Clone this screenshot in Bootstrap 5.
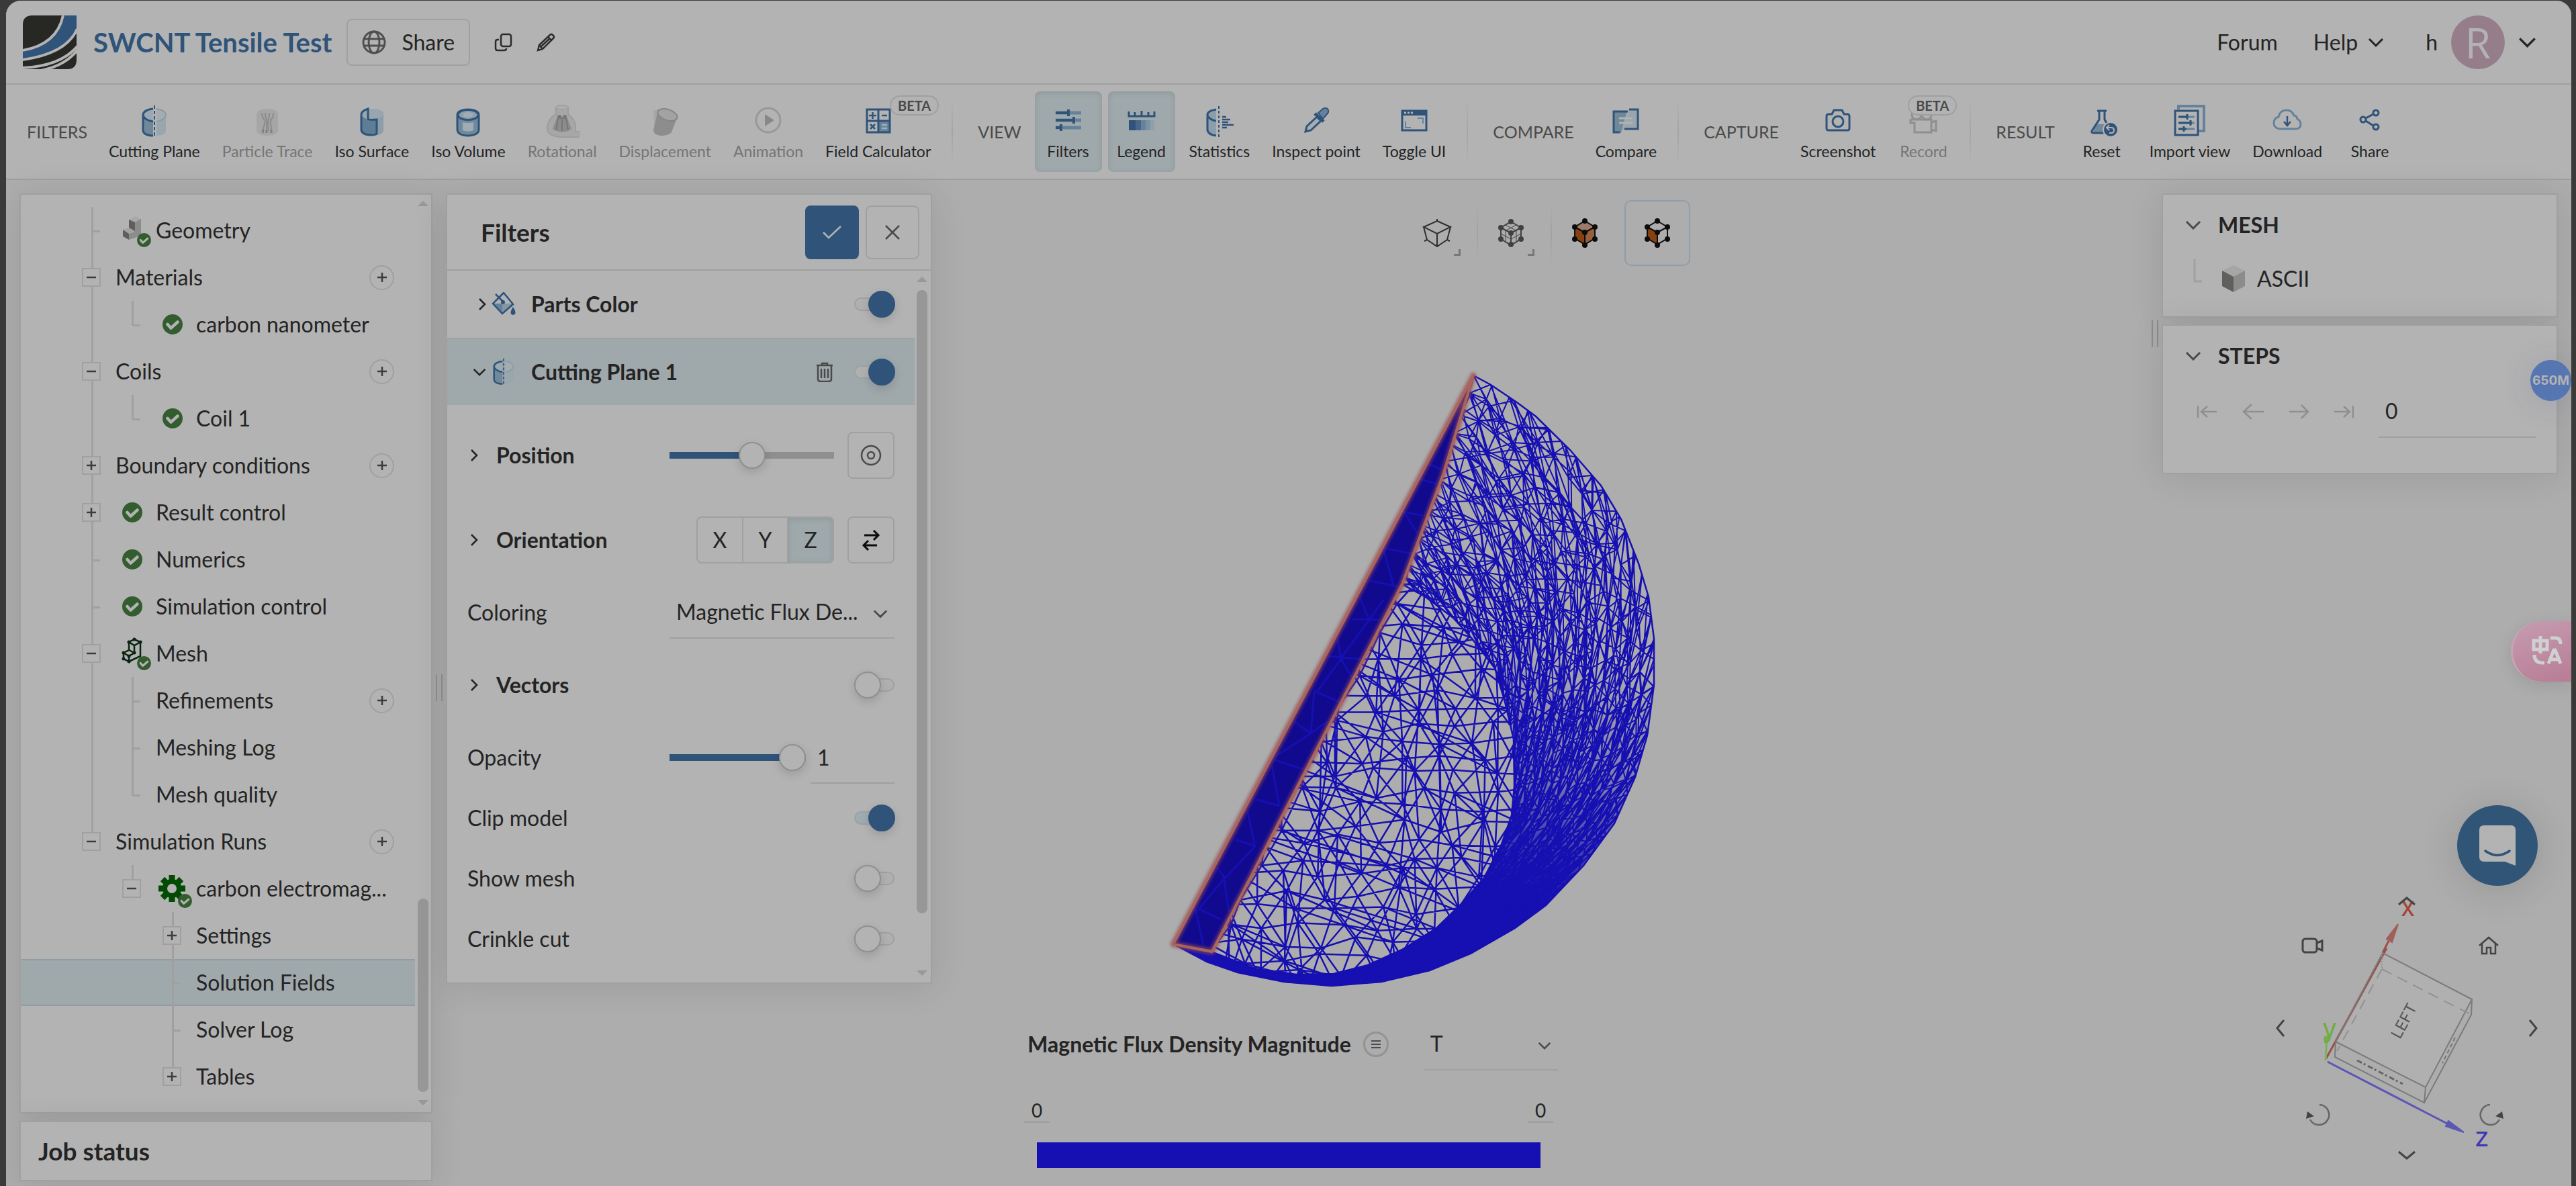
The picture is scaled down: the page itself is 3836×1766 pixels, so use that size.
<!DOCTYPE html>
<html lang="en">
<head>
<meta charset="utf-8">
<meta name="viewport" content="width=device-width, initial-scale=1">
<title>SWCNT Tensile Test</title>
<link href="https://cdn.jsdelivr.net/npm/bootstrap@5.3.0/dist/css/bootstrap.min.css" rel="stylesheet">
<style>
:root{--ink:#242424;--muted:#4a4a4a;--edge:#a0a0a0;--panel:#b3b3b3;--blue:#2f5379;--sel:#9fa8ab;--mesh:#160fb1}
html,body{height:100%}
body{background:#3a3a3a;color:var(--ink);font-family:Lato,"Noto Sans",sans-serif;font-size:32px;line-height:40px;overflow:hidden}
button{font-family:inherit;color:inherit}
svg{flex:none;display:block}
.app-shell{margin:1px 7px 0 9px;height:calc(100vh - 1px);border-radius:22px 22px 0 0;background:#adadad;overflow:hidden;position:relative}
.top-bar{height:125px;background:var(--panel);border-bottom:2px solid var(--edge);padding:0 52px 0 25px}
.top-bar a,.top-bar .user-btn{color:var(--ink);text-decoration:none}
.app-title{font-size:40px;font-weight:700;color:var(--blue);margin:0 22px 0 25px;line-height:50px}
.bare{background:none;border:0;padding:0}
.line-btn{background:transparent;border:2px solid var(--edge);border-radius:8px;padding:0;display:flex;align-items:center;justify-content:center}
.share-btn{height:70px;padding:0 21px;gap:23px}
.title-act{margin-left:36px}
.help-link{margin:0 62px 0 53px;gap:15px}
.user-btn{gap:20px}
.avatar{width:80px;height:80px;border-radius:50%;background:#957d8a;color:#b3b3b3;font:400 62px/80px "Open Sans","Noto Sans",sans-serif;text-align:center}
.tool-bar{height:142px;background:var(--panel);border-bottom:2px solid var(--edge);padding-left:31px}
.grp-name{font-size:25px;color:var(--muted);margin-right:20px;line-height:30px}
.tool{background:none;border:0;border-radius:8px;height:120px;min-width:100px;padding:20px 12px 15px;font-size:23px;line-height:28px;display:flex;flex-direction:column;align-items:center;gap:5px;white-space:nowrap;position:relative}
.tool+.tool{margin-left:9px}
.tool.on{background:var(--sel);box-shadow:inset 0 2px 10px rgba(0,0,0,.1)}
.tool:disabled{color:#757575}
.beta{position:absolute;top:6px;right:0;border:2px solid var(--edge);border-radius:15px;background:var(--panel);font-size:20px;font-weight:700;line-height:26px;padding:0 10px;color:var(--muted)}
.tool-sep{width:2px;height:100px;background:linear-gradient(transparent,#a4a4a4,transparent);margin:0 37px 0 19px}
.work{height:calc(100% - 267px);padding:20px 20px 7px;position:relative}
.box{background:var(--panel);border:2px solid var(--edge);box-shadow:0 4px 50px rgba(0,0,0,.1)}
.left-col{width:615px;gap:11px}
.box-title{font-size:37px;font-weight:700}
.job{height:90px;padding-left:26px}
.grip{width:10px;height:40px;border-left:2px solid #8d8d8d;border-right:2px solid #8d8d8d}
.grip-left{padding:716px 5px 0}
.grip-right{padding:189px 5px 0 0;margin-left:-15px}
.tree{padding:18px 0 0;flex:1;margin:0;list-style:none}
.trow{display:flex;align-items:center;height:70px;padding:0 31px 0 91px;white-space:nowrap}
.trow.sel{background:var(--sel);box-shadow:inset 0 2px #8f9ca3,inset 0 -2px #8f9ca3}
.trow>b{font-weight:400;margin-left:-10px;flex:1;overflow:hidden;text-overflow:ellipsis}
.trow svg{overflow:visible}
.g{width:60px;height:70px;flex:none;position:relative;display:flex;align-items:center}
.v::before,.h::before{content:"";position:absolute;left:14px;top:0;width:3px;height:100%;background:#a0a0a0}
.h::before{height:37px}
.tk::after{content:"";position:absolute;left:16px;top:35px;width:11px;height:3px;background:#a0a0a0}
.exp{width:28px;height:28px;border:2px solid var(--edge);background:var(--panel);padding:0;position:relative;display:flex;align-items:center;justify-content:center}
.add{width:37px;height:37px;border-radius:50%;border:2px solid var(--edge);background:none;padding:0;display:flex;align-items:center;justify-content:center;flex:none}
.bar{width:24px;display:flex;flex-direction:column;align-items:center;padding:9px 0 10px;flex:none}
.bar i{width:16px;border-radius:8px;background:#979797;display:block}
.bar::before,.bar::after{content:"";border:8px solid transparent;border-top:0;border-bottom:8px solid #989898;order:-1}
.bar::after{border-bottom:0;border-top:8px solid #989898;order:2}
.tree-bar i{height:288px;margin-top:auto;margin-bottom:12px}
.filters{width:724px;align-self:flex-start}
.f-head{height:113px;border-bottom:2px solid var(--edge);padding:0 17px 0 50px;gap:10px}
.sq{width:80px;height:80px}
.okb{background:var(--blue);border-color:var(--blue)}
.sec{height:100px;font-weight:700;padding:0 30px 0 36px}
.sec .nm{flex:1;margin-left:23px}
.sec.act{background:var(--sel);border-top:2px solid var(--edge)}
.sec .bare{margin-right:31px}
.f-bar{padding-right:3px}
.f-bar i{height:928px;margin:12px 0 auto}
.frm{padding:12px 30px 20px}
.fr{height:90px;display:flex;align-items:center;justify-content:space-between}
.fr.tall{height:126px}
.fr .lab{font-weight:700;padding-left:4px;background:none;border:0;display:flex;align-items:center;gap:27px}
.duo{display:flex;align-items:center;gap:20px}
.duo.tight{gap:7px}
.sw{appearance:none;width:60px;height:20px;border:2px solid var(--edge);border-radius:10px;position:relative;margin:0;background:#b0b0b0;flex:none}
.sw::before{content:"";position:absolute;left:-2px;top:-12px;width:40px;height:40px;border-radius:50%;background:#b3b3b3;border:2px solid #8f8f8f;box-shadow:0 5px 14px rgba(0,0,0,.14)}
.sw:checked::before{left:19px;background:var(--blue);border-color:var(--blue)}
.sw.tint{background:#9fabb2}
.rng{appearance:none;height:40px;width:245px;background:linear-gradient(90deg,var(--blue) var(--p),#8f8f8f var(--p)) center/100% 10px no-repeat;margin:0;display:block}
.rng.short{width:203px}
.rng::-webkit-slider-thumb{appearance:none;width:40px;height:40px;border-radius:50%;background:#b3b3b3;border:2px solid #8f8f8f;box-shadow:0 5px 14px rgba(0,0,0,.14)}
.s70{width:70px;height:70px}
.axes{display:flex;border:2px solid var(--edge);border-radius:8px;height:70px;width:205px;overflow:hidden}
.axes button{flex:1;background:none;border:0;border-right:2px solid var(--edge);padding:0}
.axes button:last-child{border:0;background:var(--sel);box-shadow:inset 0 2px 8px rgba(0,0,0,.1)}
.pick{position:relative;border-bottom:2px solid var(--edge);height:78px;width:335px}
.pick select{appearance:none;background:none;border:0;outline:0;width:100%;height:100%;padding:0 50px 0 10px;font:inherit;color:inherit}
.pick svg{position:absolute;right:10px;top:34px;pointer-events:none}
.num{background:none;border:0;border-bottom:2px solid var(--edge);color:inherit;outline:0;padding:0 10px;height:78px;width:125px;border-radius:0}
.num.wide{width:235px}
.views{padding-top:10px;gap:5px}
.views .vb{width:98px;height:98px;display:flex;align-items:center;justify-content:center;background:none;border:2px solid transparent;border-radius:10px;padding:0;position:relative}
.views .vb.on{border-color:#8f9ea8;margin-left:5px}
.views .vb.more::after{content:"";position:absolute;left:72px;top:71px;width:10px;height:10px;border-right:3px solid #777;border-bottom:3px solid #777}
.views hr{width:2px;height:94px;margin:2px -5px 0 5px;border:0;opacity:1;background:linear-gradient(transparent,#a2a2a2,transparent)}
.right-col{width:590px;gap:10px}
.mesh-box{padding:5px 0 16px}
.steps-box{padding:5px 0 49px}
.r-head{height:80px;font-weight:700;padding-left:33px;display:flex;align-items:center;gap:25px}
.leaf{height:80px;padding-left:45px}
.leaf .elbow{margin:-24px 28px 0 0}
.leaf .cube{margin-right:17px}
.stepper{height:85px;padding:0 30px 0 50px}
.scene{position:absolute;inset:0;overflow:hidden}
.model{position:absolute;left:1691px;top:252px}
.legend{position:absolute;left:0;right:0;bottom:27px;display:flex;flex-direction:column;align-items:center}
.legend .ttl{font-weight:700}
.legend .head{padding-left:12px}
.legend .unit{width:200px}
.legend .ends{width:788px;display:flex;justify-content:space-between;margin-top:42px}
.legend .ends input{width:38px;font-size:28px;text-align:center;background:none;border:0;border-bottom:3px solid var(--edge);padding:0;height:36px;color:inherit}
.legend .ramp{width:750px;height:38px;background:var(--mesh);margin-top:29px}
.info{width:38px;height:38px;border-radius:50%;border:3px solid #939393;background:none;padding:0;display:flex;align-items:center;justify-content:center;margin:0 52px 0 18px}
.gizmo{position:absolute;right:0;bottom:0;width:489px;height:616px}
.gizmo .gb{position:absolute;background:none;border:0;padding:0}
.gb-up{left:230px;top:185px}.gb-down{left:230px;top:563px}.gb-left{left:48px;top:367px}.gb-right{left:425px;top:367px}
.gb-cam{left:87px;top:245px}.gb-home{left:350px;top:244px}.gb-ccw{left:92px;top:493px}.gb-cw{left:350px;top:493px}
.quota{position:absolute;right:0;top:535px;width:61px;height:61px;border-radius:50%;background:#5676b1;color:#b3b3b3;font:700 19px/61px Inter,sans-serif;text-align:center;box-shadow:0 4px 50px rgba(60,60,140,.15);border:0;padding:0}
.lang{position:absolute;right:0;top:924px;width:90px;height:90px;border:0;border-left:3px solid #c9a3b5;border-radius:45px 0 0 45px;background:linear-gradient(160deg,#c69cb0,#b77d95);padding:0 0 0 26px;box-shadow:0 6px 24px rgba(0,0,0,.1)}
.chat{position:absolute;right:50px;bottom:447px;width:120px;height:120px;border-radius:50%;border:0;background:#315577;padding:0;display:flex;align-items:center;justify-content:center;box-shadow:0 6px 60px rgba(0,0,0,.14)}
</style>
<script src="https://cdn.jsdelivr.net/npm/bootstrap@5.3.0/dist/js/bootstrap.bundle.min.js"></script>
</head>
<body>
<svg width="0" height="0" class="position-absolute" aria-hidden="true">
 <defs>
  <symbol id="ok" viewBox="0 0 30 30"><circle cx="15" cy="15" r="15" fill="#335c2f"/><path d="M7.500 15l5 5.500 10-9" fill="none" stroke="#b3b3b3" stroke-width="4.500" stroke-linecap="round" stroke-linejoin="round"/></symbol>
  <symbol id="plus" viewBox="0 0 14 14"><path d="M0 7h14M7 0v14" stroke="#3c3c3c" stroke-width="2.500"/></symbol>
  <symbol id="minus" viewBox="0 0 14 14"><path d="M0 7h14" stroke="#3c3c3c" stroke-width="2.500"/></symbol>
  <symbol id="down" viewBox="0 0 24 14"><path d="M2 2l10 10L22 2" fill="none" stroke="currentColor" stroke-width="3"/></symbol>
  <symbol id="right" viewBox="0 0 12 20"><path d="M2 2l8 8-8 8" fill="none" stroke="currentColor" stroke-width="2.500"/></symbol>
  <symbol id="cut" viewBox="0 0 50 50"><path d="M23 6C13 7 8 11 8 16v22c0 5 6 8 15 8z" fill="#6f899b"/><path d="M23 6C13 7 8 11 8 15s6 9 15 10z" fill="#9aa9b1"/><path d="M23 6C13 7 8 11 8 15s6 9 15 10M8 15v23c0 5 6 8 15 8" fill="none" stroke="#2f5379" stroke-width="3"/><path d="M28 6c9 1 14 5 14 9v23c0 5-6 8-14 8z" fill="#98a6ae"/><path d="M28 6c9 1 14 5 14 9s-6 9-14 10" fill="#a4acb1" stroke="#8a9ba6" stroke-width="2"/><path d="M25 1v48" stroke="#2f5379" stroke-width="2" stroke-dasharray="5 3"/></symbol>
 </defs>
</svg>
<div class="app-shell d-flex flex-column">
 <header class="top-bar d-flex align-items-center">
  <svg width="80" height="80" viewBox="0 0 80 80"><path d="M14 0h66v66q0 14-14 14H0V14Q0 0 14 0z" fill="#272723"/><path d="M62 0h18v18C70 44 42 60 0 66V54C34 46 56 28 62 0z" fill="#2f5379"/><path d="M60 0C54 28 34 46 0 52M81 20C70 46 42 60 0 66M81 46C66 64 40 76 0 78M81 52C66 70 46 80 14 84" fill="none" stroke="#b3b3b3" stroke-width="4"/></svg>
  <h1 class="app-title">SWCNT Tensile Test</h1>
  <button class="line-btn share-btn" type="button"><svg width="36" height="36" viewBox="0 0 36 36" fill="none" stroke="#4f4f4f" stroke-width="3"><circle cx="18" cy="18" r="16"/><ellipse cx="18" cy="18" rx="8" ry="16"/><path d="M3 13h30M3 23h30"/></svg>Share</button>
  <button class="bare title-act" type="button" aria-label="Copy"><svg width="27" height="28" viewBox="0 0 27 28" fill="none" stroke="#2c2c2c" stroke-width="2.500"><rect x="10" y="2" width="15" height="18" rx="3"/><path d="M7 10H5q-3 0-3 3v10q0 3 3 3h10q3 0 3-3"/></svg></button>
  <button class="bare title-act" type="button" aria-label="Rename"><svg width="28" height="28" viewBox="0 0 28 28" fill="none" stroke="#2c2c2c" stroke-width="2.500"><path d="M2 26l2-8L20 3q2-2 4 0l1 1q2 2 0 4L9 24zM17 6l5 5M4 18l5 6"/><path d="M7 20L20 8"/></svg></button>
  <nav class="d-flex align-items-center ms-auto">
   <a href="#forum">Forum</a>
   <a href="#help" class="help-link d-flex align-items-center">Help<svg width="24" height="14"><use href="#down"/></svg></a>
   <button class="bare user-btn d-flex align-items-center" type="button"><span>h</span><span class="avatar">R</span><svg width="27" height="16"><use href="#down"/></svg></button>
  </nav>
 </header>
 <div class="tool-bar d-flex align-items-center" role="toolbar">
  <span class="grp-name">FILTERS</span>
  <button class="tool" type="button"><svg width="50" height="50"><use href="#cut"/></svg>Cutting Plane</button>
  <button class="tool" type="button" disabled><svg width="50" height="50" viewBox="0 0 50 50"><path d="M9 14c0-5 7-8 16-8s16 3 16 8v24c0 5-7 8-16 8S9 43 9 38z" fill="#a6a6a6"/><path d="M17 12c0 12 7 8 4 17-2 4-2 6-2 10M22 12c0 12 4 8 2 17v10M34 12c0 12-6 8-4 17 1 4 1 6 1 10M28 12c1 10-3 10-2 17l1 10" fill="none" stroke="#8b8b8b" stroke-width="2"/><path d="M18 37l1 5M24 37v5M31 37v5" stroke="#808080" stroke-width="3"/></svg>Particle Trace</button>
  <button class="tool" type="button"><svg width="50" height="50" viewBox="0 0 50 50"><path d="M8 14c0-5 7-8 17-8s17 3 17 8v24c0 5-7 8-17 8S8 43 8 38z" fill="#8c9ea9"/><ellipse cx="25" cy="14" rx="16" ry="8" fill="#98a6ae"/><path d="M9 15v23q2 7 15 7 6 0 8-2V22q-18 2-23-7z" fill="#5f7e95"/><path d="M19 6Q9 9 9 15v23q2 7 15 7 6 0 8-2V22q-12 1-13-1z" fill="none" stroke="#2f5379" stroke-width="3"/></svg>Iso Surface</button>
  <button class="tool" type="button"><svg width="50" height="50" viewBox="0 0 50 50"><path d="M9 15c0-5 7-8 16-8s16 3 16 8v22c0 6-7 9-16 9S9 43 9 37z" fill="#6f899b" stroke="#2f5379" stroke-width="3"/><ellipse cx="25" cy="15" rx="15" ry="7.500" fill="#8b9eab" stroke="#2f5379" stroke-width="3"/><path d="M17 26q8 2 16 0v12q-8 3-16 0z" fill="#a0acb3"/><ellipse cx="25" cy="15" rx="8" ry="4" fill="#a0acb3"/></svg>Iso Volume</button>
  <button class="tool" type="button" disabled><svg width="52" height="50" viewBox="0 2 52 50"><path d="M17 16V6q9-8 18 0v10q11 8 11 18v8h6v8H22Q2 48 4 34 6 22 17 16z" fill="#a7a7a7" stroke="#9d9d9d" stroke-width="2"/><ellipse cx="26" cy="6" rx="9" ry="3" fill="#adadad" stroke="#9d9d9d"/><path d="M18 22q8-4 16 0l6 16q-14 9-28 0z" fill="#8c8c8c"/><path d="M20 22l-3 18M26 21v20M32 22l3 18" stroke="#777" stroke-width="2"/><circle cx="22" cy="20" r="3" fill="#777"/><circle cx="30" cy="20" r="3" fill="#777"/></svg>Rotational</button>
  <button class="tool" type="button" disabled><svg width="50" height="50" viewBox="0 0 50 50"><path d="M8 10q6-6 18-3l4 34q-10 8-20 2z" fill="#a7a7a7"/><path d="M14 12L8 38q1 8 14 8 10-1 13-5l9-24z" fill="#8d8d8d"/><ellipse cx="29" cy="15" rx="15" ry="8" transform="rotate(18 29 15)" fill="#a3a3a3" stroke="#858585" stroke-width="2"/></svg>Displacement</button>
  <button class="tool" type="button" disabled><svg width="50" height="50" viewBox="0 0 50 50"><circle cx="25" cy="23" r="18" fill="none" stroke="#989898" stroke-width="3"/><path d="M20 14l14 9-14 9z" fill="#888"/></svg>Animation</button>
  <button class="tool" type="button"><svg width="50" height="50" viewBox="0 0 50 50"><path d="M26 24h16v17H26z" fill="#65829b"/><path d="M8 7h34v34H8zM25 7v34M8 24h34" fill="none" stroke="#2f5379" stroke-width="3"/><path d="M11 16h11M16.500 11v10M30 16h8M13 29l7 7M20 29l-7 7" stroke="#2f5379" stroke-width="2.500"/><path d="M30 30h8M30 35h8" stroke="#9fb0bb" stroke-width="2.500"/></svg>Field Calculator<span class="beta">BETA</span></button>
  <i class="tool-sep"></i><span class="grp-name">VIEW</span>
  <button class="tool on" type="button"><svg width="50" height="50" viewBox="0 0 50 50"><path d="M6 12h38M6 23h38M6 34h38" stroke="#65829b" stroke-width="5"/><path d="M6 12h18M6 23h26M6 34h8M25 7v10M33 18v10M14 29v10" stroke="#2f5379" stroke-width="4"/></svg>Filters</button>
  <button class="tool on" type="button"><svg width="50" height="50" viewBox="0 0 50 50"><path d="M6 10v7h38v-7M15 11v6M25 9v8M35 11v6" fill="none" stroke="#2f5379" stroke-width="3"/><path d="M6 23h10v15H6z" fill="#2f5379"/><path d="M16 23h8v15h-8z" fill="#46678a"/><path d="M24 23h7v15h-7z" fill="#65829b"/><path d="M31 23h7v15h-7z" fill="#7c93a5"/><path d="M38 23h6v15h-6z" fill="#909fab"/></svg>Legend</button>
  <button class="tool" type="button"><svg width="50" height="50" viewBox="0 0 50 50"><path d="M20 8Q7 10 7 16v22q2 7 13 7z" fill="#8b9eab"/><path d="M20 7Q7 9 7 15v23q2 7 13 8M7 16q4 7 13 8" fill="none" stroke="#2f5379" stroke-width="3"/><path d="M24 2v48" stroke="#2f5379" stroke-width="2" stroke-dasharray="4 3"/><path d="M29 18h6M29 22h12M29 26h9M29 30h17M29 34h7" stroke="#2f5379" stroke-width="2.500"/></svg>Statistics</button>
  <button class="tool" type="button"><svg width="50" height="50" viewBox="0 0 50 50"><path d="M28 12l7-6q6-3 8 2 1 3-2 6l-6 7z" fill="#65829b" stroke="#2f5379" stroke-width="2"/><path d="M23 13l13 12" stroke="#2f5379" stroke-width="5"/><path d="M26 18L11 32l-2 8 8-2 15-14z" fill="#a7adb1" stroke="#2f5379" stroke-width="3"/></svg>Inspect point</button>
  <button class="tool" type="button"><svg width="50" height="50" viewBox="0 0 50 50"><path d="M7 9h36v29H7z" fill="none" stroke="#2f5379" stroke-width="3"/><path d="M6 8h38v8H6z" fill="#2f5379"/><path d="M10 12h3M15 12h3M20 12h3" stroke="#b3b3b3" stroke-width="3"/><path d="M30 20h8v8M12 25v9h8" fill="none" stroke="#65829b" stroke-width="2"/></svg>Toggle UI</button>
  <i class="tool-sep"></i><span class="grp-name">COMPARE</span>
  <button class="tool" type="button"><svg width="50" height="50" viewBox="0 0 50 50"><path d="M7 10h20l-9 32H7z" fill="#6f899b"/><path d="M30 7h13v30H20z" fill="#9aa6ad"/><path d="M28 10H7v31h9M30 7h13v29H23" fill="none" stroke="#2f5379" stroke-width="3"/><path d="M15 20h20M15 27h20" stroke="#b3b3b3" stroke-width="3"/></svg>Compare</button>
  <i class="tool-sep"></i><span class="grp-name">CAPTURE</span>
  <button class="tool" type="button"><svg width="50" height="50" viewBox="0 0 50 50" fill="none" stroke="#2f5379" stroke-width="3"><path d="M8 17q0-3 3-3h5l3-6h12l3 6h5q3 0 3 3v18q0 3-3 3H11q-3 0-3-3z"/><circle cx="25" cy="25" r="8"/></svg>Screenshot</button>
  <button class="tool" type="button" disabled><svg width="50" height="50" viewBox="0 0 50 50" fill="none" stroke="#8f8f8f" stroke-width="3"><path d="M6 22h5M12 22h25v19H12V27H6v-5M37 26l7-2v15l-7-2"/><circle cx="15" cy="15" r="7"/><circle cx="30" cy="15" r="7"/></svg>Record<span class="beta">BETA</span></button>
  <i class="tool-sep"></i><span class="grp-name">RESULT</span>
  <button class="tool" type="button"><svg width="50" height="50" viewBox="0 0 50 50"><path d="M17 29h16l6 13H11z" fill="#6f899b"/><path d="M18 9h14M21 10v12L10 39q-1 3 3 3h22M29 10v12l6 10" fill="none" stroke="#2f5379" stroke-width="3"/><circle cx="38" cy="37" r="11" fill="#2f5379" stroke="#b3b3b3" stroke-width="2"/><path d="M33 34h6q4 0 4 4t-4 4h-3M36 30l-4 4 4 4" fill="none" stroke="#b3b3b3" stroke-width="2"/></svg>Reset</button>
  <button class="tool" type="button"><svg width="50" height="50" viewBox="0 0 50 50" fill="none"><path d="M8 7V2h38v37H38" stroke="#65829b" stroke-width="4"/><path d="M3 9h34v36H3z" stroke="#2f5379" stroke-width="3"/><path d="M8 18h24M8 27h24M8 36h24" stroke="#65829b" stroke-width="3"/><path d="M8 18h14M8 27h20M8 36h12M21 14v8M26 23v8M16 32v8" stroke="#2f5379" stroke-width="3"/></svg>Import view</button>
  <button class="tool" type="button"><svg width="50" height="50" viewBox="0 0 50 50" fill="none"><path d="M14 36q-9-1-9-9 0-7 7-9 2-10 12-10 8 0 11 8 4 0 5 5 5 3 5 8 0 7-8 7z" stroke="#65829b" stroke-width="3"/><path d="M25 17v12M20 25l5 6 5-6" stroke="#2f5379" stroke-width="2.500"/></svg>Download</button>
  <button class="tool" type="button"><svg width="50" height="50" viewBox="0 0 50 50" fill="none" stroke="#2f5379" stroke-width="3"><circle cx="15" cy="22" r="4"/><circle cx="34" cy="12" r="4"/><circle cx="34" cy="33" r="4"/><path d="M19 20l11-6M19 24l11 7"/></svg>Share</button>
 </div>
 <main class="work d-flex">
  <div class="scene">
   <svg class="model" width="800" height="980" viewBox="0 0 800 980">
    <defs>
     <clipPath id="holeClip"><path id="holePath"/></clipPath>
     <clipPath id="wallClip"><path id="wallPath" clip-rule="evenodd"/></clipPath>
     <linearGradient id="dense" gradientUnits="userSpaceOnUse" x1="600" y1="440" x2="500" y2="800"><stop offset="0" stop-color="#160fb1" stop-opacity="0"/><stop offset=".5" stop-color="#160fb1" stop-opacity=".35"/><stop offset="1" stop-color="#160fb1"/></linearGradient>
     <filter id="glow" x="-10%" y="-10%" width="120%" height="120%"><feGaussianBlur stdDeviation="2"/></filter>
    </defs>
    <g clip-path="url(#wallClip)"><path id="wallFill" fill="url(#dense)" fill-rule="evenodd"/></g>
    <path id="wallMesh" clip-path="url(#wallClip)" fill="none" stroke="#160fb1" stroke-width="2"/>
    <path id="holeMesh" clip-path="url(#holeClip)" fill="none" stroke="#160fb1" stroke-width="2.500"/>
    <path id="rims" fill="none" stroke="#160fb1" stroke-width="2.500"/>
    <path d="M494 39L47 886l58 11 283-547 61-163z" fill="#110a8f"/>
    <path d="M425 170l20 8M414 193l26 8M395 243l24 5M389 240l22 34M361 296l43 9M361 300l15 55M340 345l45 9M325 370l14 33M314 402l39 1M339 403l-42 56M339 403l21-30M292 430l5 31M278 457l51 5M297 461l-35 48M297 461l17 30M257 509l40 17M257 509l-5 63M228 555l24 17M252 572l-52 34M252 572l25-18M199 612l46 15M194 620l11 60M170 670l35 10M158 688l11 54M140 730l29 10M169 740l-45 48M112 772l12 15M122 785l8 53M84 833l34 16M80 833l12 55M80 840l43-52" stroke="#160fb1" stroke-width="3" fill="none"/>
    <path d="M494 39L47 886l58 11 283-547 61-163z" fill="none" stroke="#984c50" stroke-width="9" stroke-linejoin="round" opacity=".7" filter="url(#glow)"/>
    <path d="M494 39L47 886l58 11 283-547 61-163z" fill="none" stroke="#a8655f" stroke-width="4" stroke-linejoin="round"/>
   </svg>
   <div class="legend">
    <div class="head d-flex align-items-center"><span class="ttl">Magnetic Flux Density Magnitude</span>
     <button class="info" type="button" aria-label="Legend options"><svg width="14" height="14"><path d="M0 2h14M0 7h14M0 12h14" stroke="#474c55" stroke-width="2"/></svg></button>
     <div class="pick unit"><select aria-label="Unit"><option>T</option></select><svg width="20" height="14" viewBox="0 0 24 14" color="#4a4a4a"><use href="#down"/></svg></div></div>
    <div class="ends"><input value="0" aria-label="Minimum"><input value="0" aria-label="Maximum"></div>
    <div class="ramp"></div>
   </div>
   <div class="gizmo">
    <svg width="489" height="616" viewBox="0 0 489 616" fill="none">
     <path d="M208 269L341 338 272 469 138 401z" fill="#b0b0b0"/>
     <path d="M124 426L214 262" stroke="#994f4a" stroke-width="3"/><path d="M231 226l-17 22 8 5z" fill="#a05f5a" stroke="#a05f5a" stroke-width="2"/><path d="M208 269l9-18" stroke="#994f4a" stroke-width="3"/>
     <path d="M208 269L341 338 272 469 138 401zM138 401l-1 23 133 68 2-23M270 492l70-131 1-23" stroke="#7b7b7b" stroke-width="2"/>
     <path d="M207 293L340 361M207 293L140 415" stroke="#929292" stroke-width="2" stroke-dasharray="16 10"/><path d="M207 269v24" stroke="#929292" stroke-width="2" stroke-dasharray="2 2"/>
     <path d="M170 429l68 35" stroke="#666" stroke-width="3" stroke-dasharray="8 3 3 4"/><path d="M316 395l-19 38" stroke="#777" stroke-width="2" stroke-dasharray="6 4"/>
     <path d="M123 429l2-32" stroke="#7ab257" stroke-width="3"/><circle cx="125" cy="397" r="5" fill="#76ae50"/>
     <path d="M126 431l178 92" stroke="#5b57b4" stroke-width="3"/><path d="M329 536l-23-17-4 8z" fill="#5b57b4" stroke="#5b57b4" stroke-width="2"/>
     <g font-family="Inter,sans-serif" font-size="39"><text x="235" y="214" fill="#a34337">x</text><text x="118" y="395" fill="#70ad3f">y</text><text x="345" y="557" fill="#3d38b6">z</text></g>
     <text transform="translate(240 370) rotate(-62)" text-anchor="middle" y="8" font-family="Inter,sans-serif" font-size="23" fill="#555">LEFT</text>
    </svg>
    <button class="gb gb-up" aria-label="Rotate up"><svg width="28" height="14" fill="none" stroke="#444" stroke-width="3"><path d="M2 12L14 2l12 10"/></svg></button>
    <button class="gb gb-down" aria-label="Rotate down"><svg width="28" height="14" fill="none" stroke="#444" stroke-width="3"><path d="M2 2l12 10L26 2"/></svg></button>
    <button class="gb gb-left" aria-label="Rotate left"><svg width="15" height="28" fill="none" stroke="#444" stroke-width="3"><path d="M13 2L3 14l10 12"/></svg></button>
    <button class="gb gb-right" aria-label="Rotate right"><svg width="15" height="28" fill="none" stroke="#444" stroke-width="3"><path d="M2 2l10 12L2 26"/></svg></button>
    <button class="gb gb-cam" aria-label="Projection"><svg width="34" height="26" fill="none" stroke="#444" stroke-width="3"><rect x="2" y="3" width="21" height="20" rx="4"/><path d="M23 9l8-3v14l-8-3"/></svg></button>
    <button class="gb gb-home" aria-label="Home view"><svg width="32" height="29" fill="none" stroke="#444" stroke-width="2.500"><path d="M2 14L16 2l14 12M6 11v15h7v-9h6v9h7V11"/></svg></button>
    <button class="gb gb-ccw" aria-label="Roll left"><svg width="40" height="36" fill="none"><path d="M22 2a15 15 0 1 1-14 22" stroke="#666" stroke-width="2.500"/><path d="M4 12l10 7-12 4z" fill="#444"/></svg></button>
    <button class="gb gb-cw" aria-label="Roll right"><svg width="40" height="36" fill="none"><path d="M18 2a15 15 0 1 0 14 22" stroke="#666" stroke-width="2.500"/><path d="M36 12l-10 7 12 4z" fill="#444"/></svg></button>
   </div>
  </div>
  <div class="left-col d-flex flex-column position-relative">
   <section class="box d-flex flex-grow-1">
    <ul class="tree">
     <li class="trow"><span class="g v tk"></span><span class="g"><svg width="46" height="50" viewBox="0 0 46 50"><path d="M10 9l9-5 9 4-9 5z" fill="#a8a8a8"/><path d="M10 9l9 4v14l-9-5z" fill="#5e5e5e"/><path d="M19 13l9-5v25L10 39V30l9-3z" fill="#8b8d8c"/><path d="M1 24l9-3 9 5-9 4z" fill="#a3a3a3"/><path d="M1 24l9 6v9l-9-5z" fill="#5e5e5e"/><use href="#ok" x="22" y="29" width="21" height="21"/></svg></span><b>Geometry</b></li>
     <li class="trow"><span class="g v"><button class="exp" aria-label="Collapse"><svg width="14" height="14"><use href="#minus"/></svg></button></span><b>Materials</b><button class="add" aria-label="Add material"><svg width="14" height="14"><use href="#plus"/></svg></button></li>
     <li class="trow"><span class="g v"></span><span class="g h tk"></span><span class="g"><svg width="30" height="30"><use href="#ok"/></svg></span><b>carbon nanometer</b></li>
     <li class="trow"><span class="g v"><button class="exp" aria-label="Collapse"><svg width="14" height="14"><use href="#minus"/></svg></button></span><b>Coils</b><button class="add" aria-label="Add coil"><svg width="14" height="14"><use href="#plus"/></svg></button></li>
     <li class="trow"><span class="g v"></span><span class="g h tk"></span><span class="g"><svg width="30" height="30"><use href="#ok"/></svg></span><b>Coil 1</b></li>
     <li class="trow"><span class="g v"><button class="exp" aria-label="Expand"><svg width="14" height="14"><use href="#plus"/></svg></button></span><b>Boundary conditions</b><button class="add" aria-label="Add boundary condition"><svg width="14" height="14"><use href="#plus"/></svg></button></li>
     <li class="trow"><span class="g v"><button class="exp" aria-label="Expand"><svg width="14" height="14"><use href="#plus"/></svg></button></span><span class="g"><svg width="30" height="30"><use href="#ok"/></svg></span><b>Result control</b></li>
     <li class="trow"><span class="g v tk"></span><span class="g"><svg width="30" height="30"><use href="#ok"/></svg></span><b>Numerics</b></li>
     <li class="trow"><span class="g v tk"></span><span class="g"><svg width="30" height="30"><use href="#ok"/></svg></span><b>Simulation control</b></li>
     <li class="trow"><span class="g v"><button class="exp" aria-label="Collapse"><svg width="14" height="14"><use href="#minus"/></svg></button></span><span class="g"><svg width="46" height="50" viewBox="0 0 46 50"><path d="M10 8l8-4 9 4-9 5zM10 8v12L2 24v9l8 4 17-8V8M18 13v11l-8 5-8-5M10 29v8M10 20l8 4" fill="none" stroke="#0a2410" stroke-width="2.500"/><g fill="#0a2410"><circle cx="10" cy="8" r="2.500"/><circle cx="18" cy="4" r="2.500"/><circle cx="27" cy="8" r="2.500"/><circle cx="18" cy="24" r="2.500"/><circle cx="2" cy="24" r="2.500"/><circle cx="2" cy="33" r="2.500"/><circle cx="10" cy="37" r="2.500"/><circle cx="10" cy="29" r="2.500"/></g><use href="#ok" x="22" y="29" width="21" height="21"/></svg></span><b>Mesh</b></li>
     <li class="trow"><span class="g v"></span><span class="g v tk"></span><b>Refinements</b><button class="add" aria-label="Add refinement"><svg width="14" height="14"><use href="#plus"/></svg></button></li>
     <li class="trow"><span class="g v"></span><span class="g v tk"></span><b>Meshing Log</b></li>
     <li class="trow"><span class="g v"></span><span class="g h tk"></span><b>Mesh quality</b></li>
     <li class="trow"><span class="g h"><button class="exp" aria-label="Collapse"><svg width="14" height="14"><use href="#minus"/></svg></button></span><b>Simulation Runs</b><button class="add" aria-label="Add run"><svg width="14" height="14"><use href="#plus"/></svg></button></li>
     <li class="trow"><span class="g"></span><span class="g h"><button class="exp" aria-label="Collapse"><svg width="14" height="14"><use href="#minus"/></svg></button></span><span class="g"><svg width="54" height="56" viewBox="0 0 54 56"><g transform="translate(14 28)" stroke="#034a03" stroke-width="9" stroke-linecap="butt"><path d="M0-20V20M-20 0H20M-14-14l28 28M14-14l-28 28"/><circle r="10.500" fill="none" stroke-width="7"/><circle r="7" fill="#b3b3b3" stroke="none"/></g><use href="#ok" x="23" y="36" width="21" height="21"/></svg></span><b>carbon electromag...</b></li>
     <li class="trow"><span class="g"></span><span class="g"></span><span class="g v"><button class="exp" aria-label="Expand"><svg width="14" height="14"><use href="#plus"/></svg></button></span><b>Settings</b></li>
     <li class="trow sel"><span class="g"></span><span class="g"></span><span class="g v tk"></span><b>Solution Fields</b></li>
     <li class="trow"><span class="g"></span><span class="g"></span><span class="g v tk"></span><b>Solver Log</b></li>
     <li class="trow"><span class="g"></span><span class="g"></span><span class="g h"><button class="exp" aria-label="Expand"><svg width="14" height="14"><use href="#plus"/></svg></button></span><b>Tables</b></li>
    </ul>
    <div class="bar tree-bar"><i></i></div>
   </section>
   <section class="box job d-flex align-items-center"><span class="box-title">Job status</span></section>
  </div>
  <div class="position-relative grip-left"><div class="grip"></div></div>
  <section class="box filters position-relative">
   <div class="f-head d-flex align-items-center"><span class="box-title me-auto">Filters</span>
    <button class="line-btn sq okb" type="button" aria-label="Apply"><svg width="30" height="22" fill="none" stroke="#b3b3b3" stroke-width="2.500"><path d="M2 11l8 8L28 2"/></svg></button>
    <button class="line-btn sq" type="button" aria-label="Close"><svg width="22" height="22" fill="none" stroke="#4a4a4a" stroke-width="2.500"><path d="M1 1l20 20M21 1L1 21"/></svg></button></div>
   <div class="d-flex">
    <div class="flex-grow-1">
     <div class="sec d-flex align-items-center"><svg width="30" height="20"><use href="#right" x="10" width="12" height="20"/></svg>
      <svg width="36" height="36" viewBox="0 0 36 36"><path d="M3 17h28L16 33z" fill="#65829b"/><path d="M16 17v16l15-16z" fill="#8397a7"/><path d="M6 3l12 12M18 1L2 17l14 15L32 18 18 1z" fill="none" stroke="#2f5379" stroke-width="2.500"/><circle cx="17" cy="15" r="3" fill="#2f5379"/><path d="M32 22q7 11 0 12-7-1 0-12z" fill="#2f5379"/></svg>
      <span class="nm">Parts Color</span><input class="sw" type="checkbox" role="switch" aria-label="Parts Color" checked></div>
     <div class="sec act d-flex align-items-center"><svg width="30" height="14"><use href="#down" x="2" width="20" height="14"/></svg>
      <svg width="36" height="42" viewBox="6 0 38 50"><use href="#cut" width="50" height="50"/></svg>
      <span class="nm">Cutting Plane 1</span><button class="bare" type="button" aria-label="Delete"><svg width="26" height="30" fill="none" stroke="#4a4a4a" stroke-width="2.500"><path d="M1 5h24M9 5V2h8v3M3 6v19q0 4 4 4h12q4 0 4-4V6M8 10v14M13 10v14M18 10v14"/></svg></button><input class="sw" type="checkbox" role="switch" aria-label="Cutting Plane 1" checked></div>
     <form class="frm">
      <div class="fr tall"><button class="lab" type="button"><svg width="12" height="20"><use href="#right"/></svg>Position</button><span class="duo"><input class="rng" type="range" aria-label="Position" value="50" style="--p:50%"><button class="line-btn s70" type="button" aria-label="Center"><svg width="32" height="32" fill="none" stroke="#4a4a4a" stroke-width="2.500"><circle cx="16" cy="16" r="14"/><circle cx="16" cy="16" r="5"/></svg></button></span></div>
      <div class="fr tall"><button class="lab" type="button"><svg width="12" height="20"><use href="#right"/></svg>Orientation</button><span class="duo"><span class="axes"><button type="button">X</button><button type="button">Y</button><button type="button">Z</button></span><button class="line-btn s70" type="button" aria-label="Flip"><svg width="28" height="32" fill="none" stroke="#0c0c0c" stroke-width="3"><path d="M4 9h21M18 2l7 7-7 7M23 24H3M10 17l-7 7 7 7"/></svg></button></span></div>
      <div class="fr"><label for="coloring">Coloring</label><span class="pick"><select id="coloring"><option>Magnetic Flux De...</option></select><svg width="22" height="14" color="#4a4a4a"><use href="#down"/></svg></span></div>
      <div class="fr tall"><button class="lab" type="button"><svg width="12" height="20"><use href="#right"/></svg>Vectors</button><input class="sw" type="checkbox" role="switch" aria-label="Vectors"></div>
      <div class="fr"><label for="opac">Opacity</label><span class="duo tight"><input class="rng short" id="opac" type="range" value="100" style="--p:90%"><input class="num" value="1" aria-label="Opacity value"></span></div>
      <div class="fr"><label for="clip">Clip model</label><input class="sw tint" id="clip" type="checkbox" role="switch" checked></div>
      <div class="fr"><label for="show">Show mesh</label><input class="sw" id="show" type="checkbox" role="switch"></div>
      <div class="fr"><label for="crk">Crinkle cut</label><input class="sw" id="crk" type="checkbox" role="switch"></div>
     </form>
    </div>
    <div class="bar f-bar"><i></i></div>
   </div>
  </section>
  <div class="views d-flex flex-grow-1 justify-content-center align-items-start position-relative">
   <button class="vb more" type="button" aria-label="Perspective"><svg width="44" height="44" fill="none" stroke="#2e2e2e" stroke-width="2"><path d="M22 4l20 9-20 10L2 13zM2 13l5 19 15 10 15-10 5-19M22 23v19M22 1v4M7 32l-4 2M37 32l4 2"/></svg></button><hr>
   <button class="vb more" type="button" aria-label="Surfaces with grid"><svg width="38" height="42" fill="none" stroke="#404040" stroke-width="2"><path d="M19 4l15 9v17l-15 9L4 30V13zM4 13l15 8 15-8M19 21v18"/><path stroke-width="1" d="M11 9l15 8M27 9l-15 8M4 22l15 8 15-8M11 17v17M27 17v17"/><g fill="#404040" stroke="none"><circle cx="19" cy="4" r="4"/><circle cx="4" cy="13" r="4"/><circle cx="34" cy="13" r="4"/><circle cx="19" cy="21" r="4"/><circle cx="4" cy="30" r="4"/><circle cx="34" cy="30" r="4"/><circle cx="19" cy="38" r="4"/></g></svg></button><hr>
   <button class="vb" type="button" aria-label="Volumes"><svg width="38" height="44"><path d="M19 4l15 9-15 8-15-8z" fill="#9c7b68"/><path d="M4 13l15 8v18L4 30z" fill="#85410f"/><path d="M34 13l-15 8v18l15-9z" fill="#95603b"/><path d="M19 4l15 9v17l-15 9L4 30V13zM4 13l15 8 15-8M19 21v18" fill="none" stroke="#0c0c0c" stroke-width="2"/><g fill="#0c0c0c"><circle cx="19" cy="4" r="4"/><circle cx="4" cy="13" r="4"/><circle cx="34" cy="13" r="4"/><circle cx="19" cy="21" r="4"/><circle cx="4" cy="31" r="4"/><circle cx="34" cy="31" r="4"/><circle cx="19" cy="40" r="4"/></g></svg></button>
   <button class="vb on" type="button" aria-label="Faces"><svg width="38" height="44"><path d="M4 13l15 8v18L4 30z" fill="#85410f"/><path d="M19 4l15 9v17l-15 9L4 30V13zM4 13l15 8 15-8M19 21v18" fill="none" stroke="#0c0c0c" stroke-width="2"/><g fill="#0c0c0c"><circle cx="19" cy="4" r="4"/><circle cx="4" cy="13" r="4"/><circle cx="34" cy="13" r="4"/><circle cx="19" cy="21" r="4"/><circle cx="4" cy="31" r="4"/><circle cx="34" cy="31" r="4"/><circle cx="19" cy="40" r="4"/></g></svg></button>
  </div>
  <div class="position-relative grip-right"><div class="grip"></div></div>
  <div class="right-col d-flex flex-column position-relative align-self-start">
   <section class="box mesh-box"><div class="r-head"><svg width="24" height="14" color="#4a4a4a"><use href="#down"/></svg>MESH</div>
    <div class="leaf d-flex align-items-center"><svg class="elbow" width="14" height="38"><path d="M2 2v33h11" fill="none" stroke="#a0a0a0" stroke-width="3"/></svg><svg class="cube" width="36" height="42"><path d="M1 9l17-8 17 8-17 9z" fill="#a6a6a6"/><path d="M1 9l17 9v23L1 32z" fill="#5f5f5d"/><path d="M35 9l-17 9v23l17-9z" fill="#8b8d8c"/></svg>ASCII</div></section>
   <section class="box steps-box"><div class="r-head"><svg width="24" height="14" color="#4a4a4a"><use href="#down"/></svg>STEPS</div>
    <div class="stepper d-flex align-items-center justify-content-between">
     <button class="bare" aria-label="First step"><svg width="31" height="22" fill="none" stroke="#8f8f8f" stroke-width="2.500"><path d="M2 2v18M30 11H8M16 3l-9 8 9 8"/></svg></button>
     <button class="bare" aria-label="Previous step"><svg width="34" height="26" fill="none" stroke="#8f8f8f" stroke-width="2.500"><path d="M33 13H3M15 2L3 13l12 11"/></svg></button>
     <button class="bare" aria-label="Next step"><svg width="30" height="24" fill="none" stroke="#8f8f8f" stroke-width="2.500"><path d="M0 12h28M18 2l10 10-10 10"/></svg></button>
     <button class="bare" aria-label="Last step"><svg width="31" height="22" fill="none" stroke="#8f8f8f" stroke-width="2.500"><path d="M29 2v18M1 11h22M15 3l9 8-9 8"/></svg></button>
     <input class="num wide" value="0" aria-label="Step"></div></section>
  </div>
 </main>
 <button class="quota" type="button">650M</button>
 <button class="lang" type="button" aria-label="Translate"><svg width="54" height="50" fill="none" stroke="#d0d0d0" stroke-width="5"><path d="M5 9h20v13H5zM15 2v26M30 5h8q7 0 7 9M6 30q0 12 12 12h3"/><path d="M27 43l8-20h2l8 20M30 37h12"/></svg></button>
 <button class="chat" type="button" aria-label="Open chat"><svg width="54" height="60"><path d="M7 0h40q7 0 7 7v53l-16-6H7q-7 0-7-7V7q0-7 7-7z" fill="#b3b3b3"/><path d="M9 38q18 13 36 0" fill="none" stroke="#315577" stroke-width="3.500" stroke-linecap="round"/></svg></button>
</div>
<script>
// Wireframe of the clipped shell: outer rim, inner rim and seeded jitter for the nodes.
const outer=[[494,39],[520,53],[560,80],[587,100],[638,150],[684,203],[714,253],[740,319],[755,369],[763,431],[763,500],[753,575],[735,637],[704,706],[658,769],[602,828],[556,862],[490,900],[429,925],[357,942],[283,948],[212,942],[143,928],[97,912],[48,886]];
const inner=[[388,350],[423,369],[464,400],[492,431],[526,475],[541,525],[554,581],[555,650],[551,694],[536,737],[510,787],[474,828],[439,862],[388,894],[337,917],[286,930],[230,931],[168,922],[106,898]];
let seed=7;const rnd=()=>(seed=(seed*16807)%2147483647)/2147483647;
const at=(pts,t)=>{const L=[0];for(let i=1;i<pts.length;i++)L.push(L[i-1]+Math.hypot(pts[i][0]-pts[i-1][0],pts[i][1]-pts[i-1][1]));
 const d=Math.max(0,Math.min(1,t))*L[L.length-1];let i=1;while(i<L.length-1&&L[i]<d)i++;const k=(d-L[i-1])/(L[i]-L[i-1]);
 return [pts[i-1][0]+(pts[i][0]-pts[i-1][0])*k,pts[i-1][1]+(pts[i][1]-pts[i-1][1])*k]};
const poly=p=>'M'+p.map(q=>q.map(n=>n.toFixed(1)).join(' ')).join('L');
const set=(id,d)=>document.getElementById(id).setAttribute('d',d);
const wall=poly(outer.concat(inner.slice().reverse()))+'Z';
set('wallPath',wall);set('wallFill',wall);set('holePath',poly(inner)+'Z');set('rims',poly(outer)+poly(inner));
// Slanted families of lines across the shell, tighter toward the inner rim.
let d='';
for(let layer=0;layer<2;layer++){
 const NS=46,NT=14,g=[];
 for(let i=0;i<=NS;i++){g.push([]);for(let j=0;j<=NT;j++){const js=i+(rnd()-.5)*.4,jt=Math.pow(Math.max(0,Math.min(1,(j+(j%NT?(rnd()-.5)*.5:0))/NT)),1.25);
  const a=at(inner,js/NS),b=at(outer,js/NS);g[i].push([a[0]+(b[0]-a[0])*jt,a[1]+(b[1]-a[1])*jt])}}
 for(let i=0;i<NS;i++)for(let j=0;j<NT;j++){d+=poly([g[i][j],g[i+1][j]])+poly([g[i+1][j],g[i][j+1]]);
  if(rnd()>.4)d+=poly([g[i][j],g[i][j+1]]);if(rnd()>.5)d+=poly([g[i][j],g[i+1][j+1]]);
  if(i+2<=NS&&rnd()>.5)d+=poly([g[i][j+1],g[i+2][j]])}
}
set('wallMesh',d);
// Face mesh: two overlapping layers of triangles with extra spokes at the hubs.
d='';
for(let layer=0;layer<2;layer++){
 const S=58,g=[];
 for(let r=0;r<16;r++){g.push([]);for(let c=0;c<12;c++)g[r].push([c*S+(r%2)*S/2-20+layer*25+(rnd()-.5)*20,310+r*50+layer*22+(rnd()-.5)*20])}
 for(let r=0;r<14;r++)for(let c=0;c<11;c++){const o=r%2;d+=poly([g[r][c],g[r][c+1]])+poly([g[r][c],g[r+1][c]])+(o?poly([g[r][c],g[r+1][c+1]]):poly([g[r][c+1],g[r+1][c]]));
  if(rnd()>.5)d+=poly([g[r][c],g[r+2][c]]);if(c<10&&rnd()>.6)d+=poly([g[r][c],g[r+1][c+2]])}
}
set('holeMesh',d);
</script>
</body>
</html>
